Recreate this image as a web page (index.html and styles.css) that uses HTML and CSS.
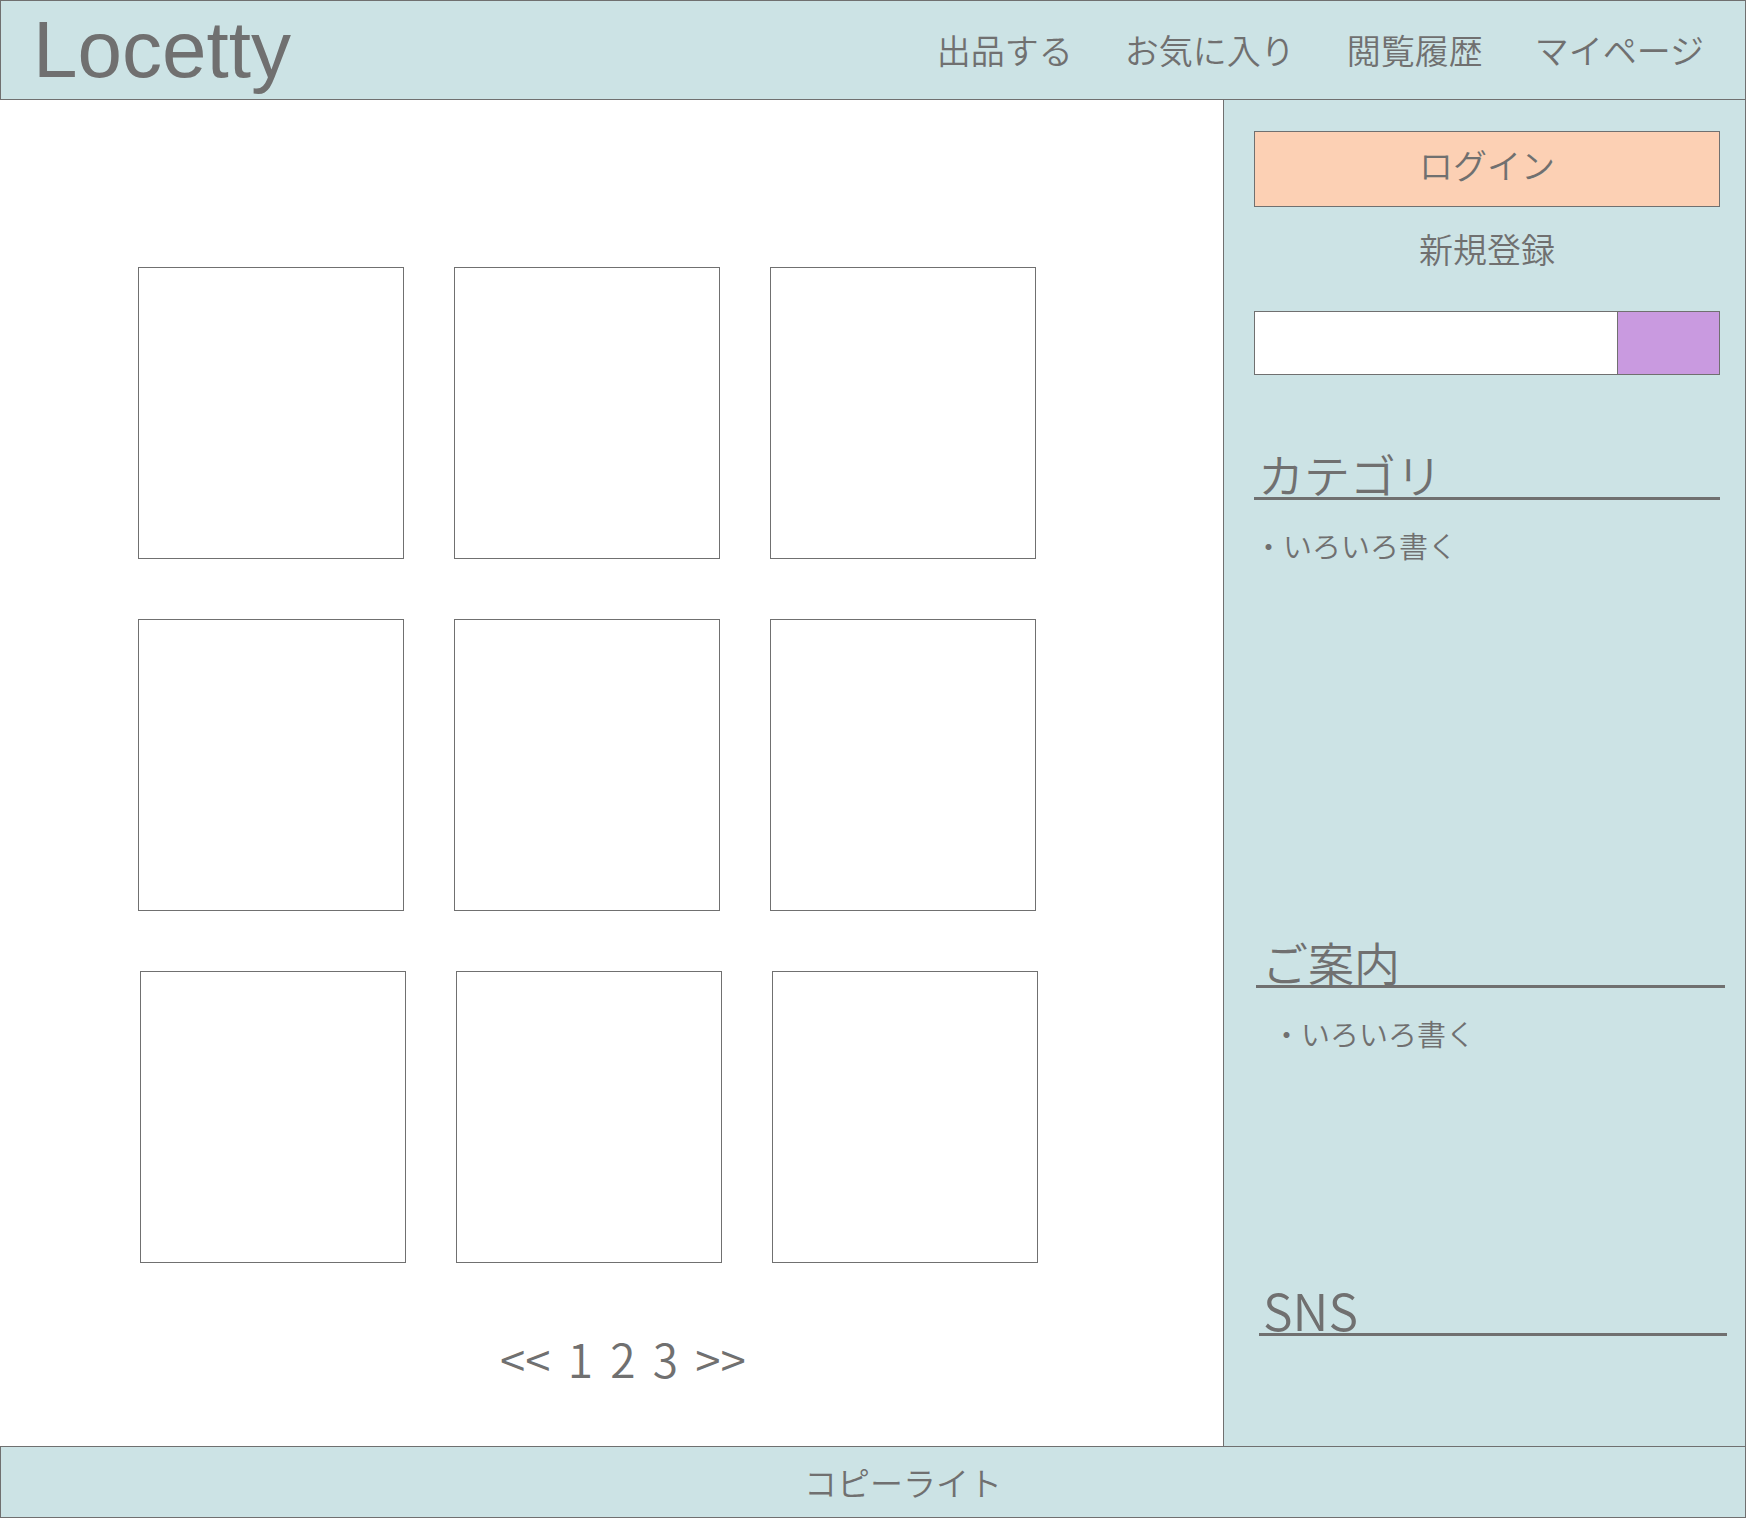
FILE: index.html
```html
<!DOCTYPE html>
<html lang="ja">
<head>
<meta charset="utf-8">
<title>Locetty</title>
<link rel="stylesheet" href="styles.css">
</head>
<body>
<header class="header">
  <div class="logo">Locetty</div>
  <nav class="nav">
    <a class="nav-item">出品する</a>
    <a class="nav-item">お気に入り</a>
    <a class="nav-item">閲覧履歴</a>
    <a class="nav-item">マイページ</a>
  </nav>
</header>
<div class="middle">
  <main class="content">
    <div class="grid">
      <div class="card"></div>
      <div class="card"></div>
      <div class="card"></div>
      <div class="card"></div>
      <div class="card"></div>
      <div class="card"></div>
      <div class="card card-shift"></div>
      <div class="card card-shift"></div>
      <div class="card card-shift"></div>
    </div>
    <div class="pager">&lt;&lt; 1 2 3 &gt;&gt;</div>
  </main>
  <aside class="sidebar">
    <div class="login">ログイン</div>
    <div class="signup">新規登録</div>
    <div class="search">
      <div class="search-input"></div>
      <div class="search-btn"></div>
    </div>
    <h2 class="side-heading heading-cat">カテゴリ</h2>
    <p class="side-item">・いろいろ書く</p>
    <h2 class="side-heading heading-info">ご案内</h2>
    <p class="side-item side-item-indent">・いろいろ書く</p>
    <h2 class="side-heading heading-sns">SNS</h2>
  </aside>
</div>
<footer class="footer">コピーライト</footer>
</body>
</html>
```

FILE: styles.css
```css
* { box-sizing: border-box; }

body {
  margin: 0;
  width: 1746px;
  height: 1518px;
  font-family: "Noto Sans CJK JP", "Noto Sans", sans-serif;
  font-weight: 350;
  color: #707070;
  background: #ffffff;
}

.header {
  height: 100px;
  border: 1px solid #707070;
  background: #cce3e5;
  display: flex;
  align-items: center;
  justify-content: space-between;
  padding: 0 41px 0 32px;
}

.logo {
  font-family: "Liberation Sans", Arial, sans-serif;
  font-weight: normal;
  font-size: 80px;
  line-height: 80px;
  color: #707070;
}

.nav {
  display: flex;
  gap: 52px;
}

.nav-item {
  font-size: 34px;
  line-height: 40px;
  color: #707070;
}

.middle {
  display: flex;
  height: 1346px;
}

.content {
  width: 1223px;
  flex: none;
  padding: 167px 0 0 138px;
}

.grid {
  display: grid;
  grid-template-columns: repeat(3, 266px);
  grid-auto-rows: 292px;
  column-gap: 50px;
  row-gap: 60px;
}

.card {
  border: 1px solid #707070;
  background: #ffffff;
}

.card-shift {
  margin-left: 2px;
  margin-right: -2px;
}

.pager {
  margin-top: 65px;
  padding-left: 362px;
  font-size: 46px;
  line-height: 60px;
  word-spacing: 7px;
}

.sidebar {
  flex: 1;
  background: #cce3e5;
  border-left: 1px solid #707070;
  border-right: 1px solid #707070;
  padding: 31px 25px 0 30px;
}

.login {
  height: 76px;
  background: #fcd0b4;
  border: 1px solid #707070;
  display: flex;
  align-items: center;
  justify-content: center;
  padding-bottom: 10px;
  font-size: 34px;
}

.signup {
  margin-top: 17px;
  line-height: 50px;
  text-align: center;
  font-size: 34px;
}

.search {
  margin-top: 37px;
  height: 64px;
  display: flex;
}

.search-input {
  flex: 1;
  background: #ffffff;
  border: 1px solid #707070;
}

.search-btn {
  width: 102px;
  background: #c99ae0;
  border: 1px solid #707070;
  border-left: none;
}

.side-heading {
  margin: 0;
  font-weight: 350;
  font-size: 46px;
  line-height: 48px;
  padding-left: 4px;
  border-bottom: 3px solid #707070;
}

.heading-cat {
  margin-top: 74px;
}

.heading-info {
  margin-top: 372px;
  margin-left: 2px;
  margin-right: -5px;
  padding-left: 6px;
}

.heading-sns {
  margin-top: 232px;
  margin-left: 5px;
  margin-right: -7px;
  padding-left: 4px;
  font-size: 50px;
}

.side-item {
  margin: 25px 0 0;
  font-size: 29px;
  line-height: 40px;
}

.side-item-indent {
  padding-left: 18px;
}

.footer {
  height: 72px;
  border: 1px solid #707070;
  background: #cce3e5;
  display: flex;
  align-items: center;
  justify-content: center;
  padding-left: 60px;
  font-size: 33px;
}
```
